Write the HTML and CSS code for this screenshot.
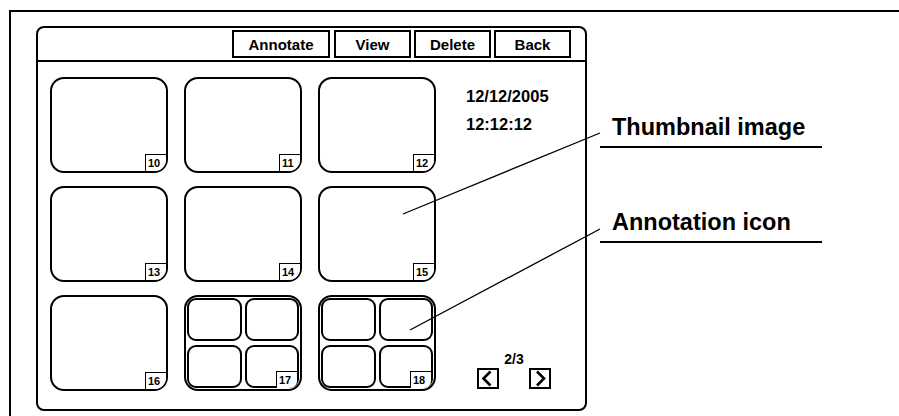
FILE: index.html
```html
<!DOCTYPE html>
<html lang="en">

<head>
  <meta charset="UTF-8" />
  <meta name="viewport" content="width=device-width, initial-scale=1.0" />
  <title>Thumbnail view</title>
  <link rel="stylesheet" href="styles.css">
</head>

<body>
  <div class="sheet">
    <div class="device">
      <div class="toolbar">
        <button class="tool tool-wide">Annotate</button>
        <button class="tool">View</button>
        <button class="tool">Delete</button>
        <button class="tool">Back</button>
      </div>

      <div class="screen">
        <div class="thumbs">
          <div class="thumb"><span class="tag">10</span></div>
          <div class="thumb"><span class="tag">11</span></div>
          <div class="thumb"><span class="tag">12</span></div>
          <div class="thumb"><span class="tag">13</span></div>
          <div class="thumb"><span class="tag">14</span></div>
          <div class="thumb"><span class="tag">15</span></div>
          <div class="thumb"><span class="tag">16</span></div>
          <div class="thumb quad">
            <span class="cell"></span><span class="cell"></span>
            <span class="cell"></span><span class="cell"></span>
            <span class="tag">17</span>
          </div>
          <div class="thumb quad">
            <span class="cell"></span><span class="cell"></span>
            <span class="cell"></span><span class="cell"></span>
            <span class="tag">18</span>
          </div>
        </div>

        <div class="side">
          <p class="stamp">12/12/2005</p>
          <p class="stamp">12:12:12</p>
          <div class="pager">
            <div class="page-num">2/3</div>
            <div class="page-btns">
              <span class="page-btn">
                <svg width="18" height="17" viewBox="0 0 18 17"><polyline points="11.5,1.5 4.5,8.5 11.5,15.5" /></svg>
              </span>
              <span class="page-btn">
                <svg width="18" height="17" viewBox="0 0 18 17"><polyline points="6,1.5 13,8.5 6,15.5" /></svg>
              </span>
            </div>
          </div>
        </div>
      </div>
    </div>

    <div class="callouts">
      <div class="callout callout-thumb">Thumbnail image</div>
      <div class="callout callout-icon">Annotation icon</div>
    </div>
  </div>

  <!-- leader lines from the labels to the parts they point at -->
  <svg class="leaders" width="899" height="416" viewBox="0 0 899 416">
    <line x1="600" y1="133" x2="403" y2="214" />
    <line x1="600" y1="229" x2="410" y2="330" />
  </svg>
</body>

</html>
```

FILE: styles.css
```css
html, body {
  margin: 0;
  height: 416px;
  overflow: hidden;
  background: #fff;
}

body {
  position: relative;
  font-family: 'Liberation Sans', Arial, sans-serif;
  font-weight: bold;
  color: #000;
}

.sheet {
  margin: 10px 0 0 9px;
  padding: 14px 0 0 25px;
  border-top: 2px solid #000;
  border-left: 2px solid #000;
  width: 890px;
  height: 406px;
  box-sizing: border-box;
  display: flex;
  align-items: flex-start;
}

.device {
  width: 551px;
  height: 385px;
  box-sizing: border-box;
  border: 2px solid #000;
  border-radius: 8px;
  display: flex;
  flex-direction: column;
  flex-shrink: 0;
}

.toolbar {
  height: 34px;
  box-sizing: border-box;
  border-bottom: 2px solid #000;
  padding: 2px 14px 0 0;
  display: flex;
  justify-content: flex-end;
  gap: 3px;
}

.tool {
  width: 77px;
  height: 28px;
  box-sizing: border-box;
  border: 2px solid #000;
  border-radius: 0;
  background: #fff;
  padding: 0;
  font-family: inherit;
  font-weight: bold;
  font-size: 15px;
  color: #000;
}
.tool-wide { width: 98px; margin-right: 1px; }

.screen {
  flex: 1;
  display: flex;
  padding: 15px 0 0 12px;
}

.thumbs {
  display: grid;
  grid-template-columns: repeat(3, 118px);
  grid-auto-rows: 96px;
  gap: 13px 16px;
}

.thumb {
  position: relative;
  box-sizing: border-box;
  border: 2px solid #000;
  border-radius: 14px;
}

.quad {
  display: grid;
  grid-template-columns: 1fr 1fr;
  grid-template-rows: 1fr 1fr;
  gap: 4px 3px;
  padding: 1px;
}

.cell {
  border: 2px solid #000;
  border-radius: 9px;
}

.tag {
  position: absolute;
  right: 0;
  bottom: 0;
  width: 21px;
  height: 17px;
  box-sizing: border-box;
  border-left: 1.5px solid #000;
  border-top: 1.5px solid #000;
  border-bottom-right-radius: 11px;
  background: #fff;
  padding-left: 2px;
  font-size: 11px;
  line-height: 16px;
}
.quad .tag { right: 3px; bottom: 1px; border-bottom-right-radius: 7px; }

.side {
  flex: 1;
  height: 314px;
  display: flex;
  flex-direction: column;
  padding-left: 30px;
}

.stamp {
  margin: 11px 0 0;
  font-size: 16.5px;
  line-height: 17px;
}

.pager {
  margin: auto 0 2px 11px;
  width: 74px;
}

.page-num {
  text-align: center;
  font-size: 14px;
  line-height: 14px;
  margin-bottom: 2px;
}

.page-btns {
  display: flex;
  justify-content: space-between;
}

.page-btn {
  width: 22px;
  height: 21px;
  box-sizing: border-box;
  border: 2px solid #000;
  display: flex;
}
.page-btn polyline {
  fill: none;
  stroke: #000;
  stroke-width: 2.6;
}

.callouts {
  margin-left: 13px;
  width: 222px;
  flex-shrink: 0;
}

.callout {
  font-size: 23.5px;
  line-height: 23px;
  padding: 0 0 7px 12px;
  border-bottom: 2px solid #000;
}
.callout-thumb { margin-top: 90px; }
.callout-icon { margin-top: 63px; }

.leaders {
  position: absolute;
  left: 0;
  top: 0;
  pointer-events: none;
}
.leaders line {
  stroke: #000;
  stroke-width: 1.3;
}
```
